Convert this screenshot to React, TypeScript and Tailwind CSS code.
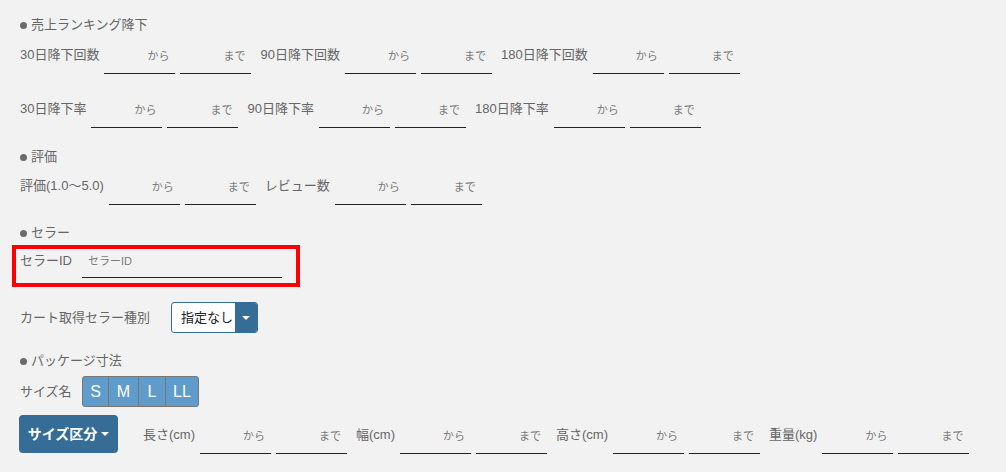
import { ReactNode } from "react";

const font = {
  fontFamily: '"Liberation Sans", "Noto Sans CJK JP", sans-serif',
};

function Heading({ children, className = "" }: { children: ReactNode; className?: string }) {
  return (
    <div className={`flex items-center text-[13px] leading-[20px] text-[#666] ${className}`}>
      <span className="mr-[4px] h-[7px] w-[7px] rounded-full bg-[#6b6b6b]" />
      {children}
    </div>
  );
}

function Underline({
  placeholder,
  className = "h-[29px] w-[71px]",
  align = "right",
}: {
  placeholder: string;
  className?: string;
  align?: "right" | "left";
}) {
  return (
    <input
      type="text"
      placeholder={placeholder}
      className={`border-0 border-b border-[#222] bg-transparent pb-[6px] text-[11px] outline-none placeholder:text-[#7a7a7a] ${
        align === "right" ? "pr-[6px] text-right" : "pl-[6px] text-left"
      } ${className}`}
      style={font}
    />
  );
}

function Range({ label }: { label: string }) {
  return (
    <div className="mr-[9px] flex items-start">
      <span className="mr-[5px] text-[13px] leading-[20px] text-[#666]">{label}</span>
      <Underline placeholder="から" />
      <span className="w-[5px]" />
      <Underline placeholder="まで" />
    </div>
  );
}

export default function App() {
  return (
    <div className="min-h-[472px] w-[1006px] bg-[#f2f2f2] pl-[20px] pt-[15px]" style={font}>
      <Heading>売上ランキング降下</Heading>
      <div className="mt-[10px] flex items-start">
        <Range label="30日降下回数" />
        <Range label="90日降下回数" />
        <Range label="180日降下回数" />
      </div>
      <div className="mt-[25px] flex items-start">
        <Range label="30日降下率" />
        <Range label="90日降下率" />
        <Range label="180日降下率" />
      </div>

      <Heading className="mt-[19px]">評価</Heading>
      <div className="mt-[9px] flex items-start">
        <Range label="評価(1.0〜5.0)" />
        <Range label="レビュー数" />
      </div>

      <Heading className="mt-[18px]">セラー</Heading>
      <div className="ml-[-8px] mt-[2px] flex h-[42px] w-[288px] items-start border-[4px] border-[#ff0000] pl-[4px] pt-[2px]">
        <span className="w-[62px] text-[13px] leading-[20px] text-[#666]">セラーID</span>
        <Underline placeholder="セラーID" className="h-[27px] w-[200px]" align="left" />
      </div>

      <div className="mt-[15px] flex items-center">
        <span className="w-[151px] text-[13px] leading-[20px] text-[#666]">カート取得セラー種別</span>
        <div className="flex h-[31px] w-[87px] overflow-hidden rounded-[3px] border border-[#366d97] bg-white">
          <span className="flex flex-1 items-center pl-[9px] text-[13px] text-[#222]">指定なし</span>
          <span className="flex w-[22px] items-center justify-center bg-[#366d97]">
            <span className="h-0 w-0 border-x-[4px] border-t-[4px] border-x-transparent border-t-white" />
          </span>
        </div>
      </div>

      <Heading className="mt-[18px]">パッケージ寸法</Heading>
      <div className="mt-[5px] flex items-center">
        <span className="w-[62px] text-[13px] leading-[20px] text-[#666]">サイズ名</span>
        <div className="flex h-[31px] overflow-hidden rounded-[3px] border border-[#777] bg-[#5f9ccb] text-[16px] text-white">
          {[
            ["S", "w-[25px]"],
            ["M", "w-[30px]"],
            ["L", "w-[27px]"],
            ["LL", "w-[33px]"],
          ].map(([s, w], i) => (
            <span key={s} className={`flex items-center justify-center ${w} ${i > 0 ? "border-l border-[#777]" : ""}`}>
              {s}
            </span>
          ))}
        </div>
      </div>

      <div className="ml-[-1px] mt-[8px] flex items-start">
        <button className="mr-[25px] flex h-[38px] w-[99px] items-center justify-center rounded-[4px] bg-[#366d97] text-[14px] font-bold text-white">
          サイズ区分
          <span className="ml-[4px] h-0 w-0 border-x-[4px] border-t-[4px] border-x-transparent border-t-white" />
        </button>
        <div className="mt-[10px] flex items-start">
          <Range label="長さ(cm)" />
          <Range label="幅(cm)" />
          <Range label="高さ(cm)" />
          <Range label="重量(kg)" />
        </div>
      </div>
    </div>
  );
}
